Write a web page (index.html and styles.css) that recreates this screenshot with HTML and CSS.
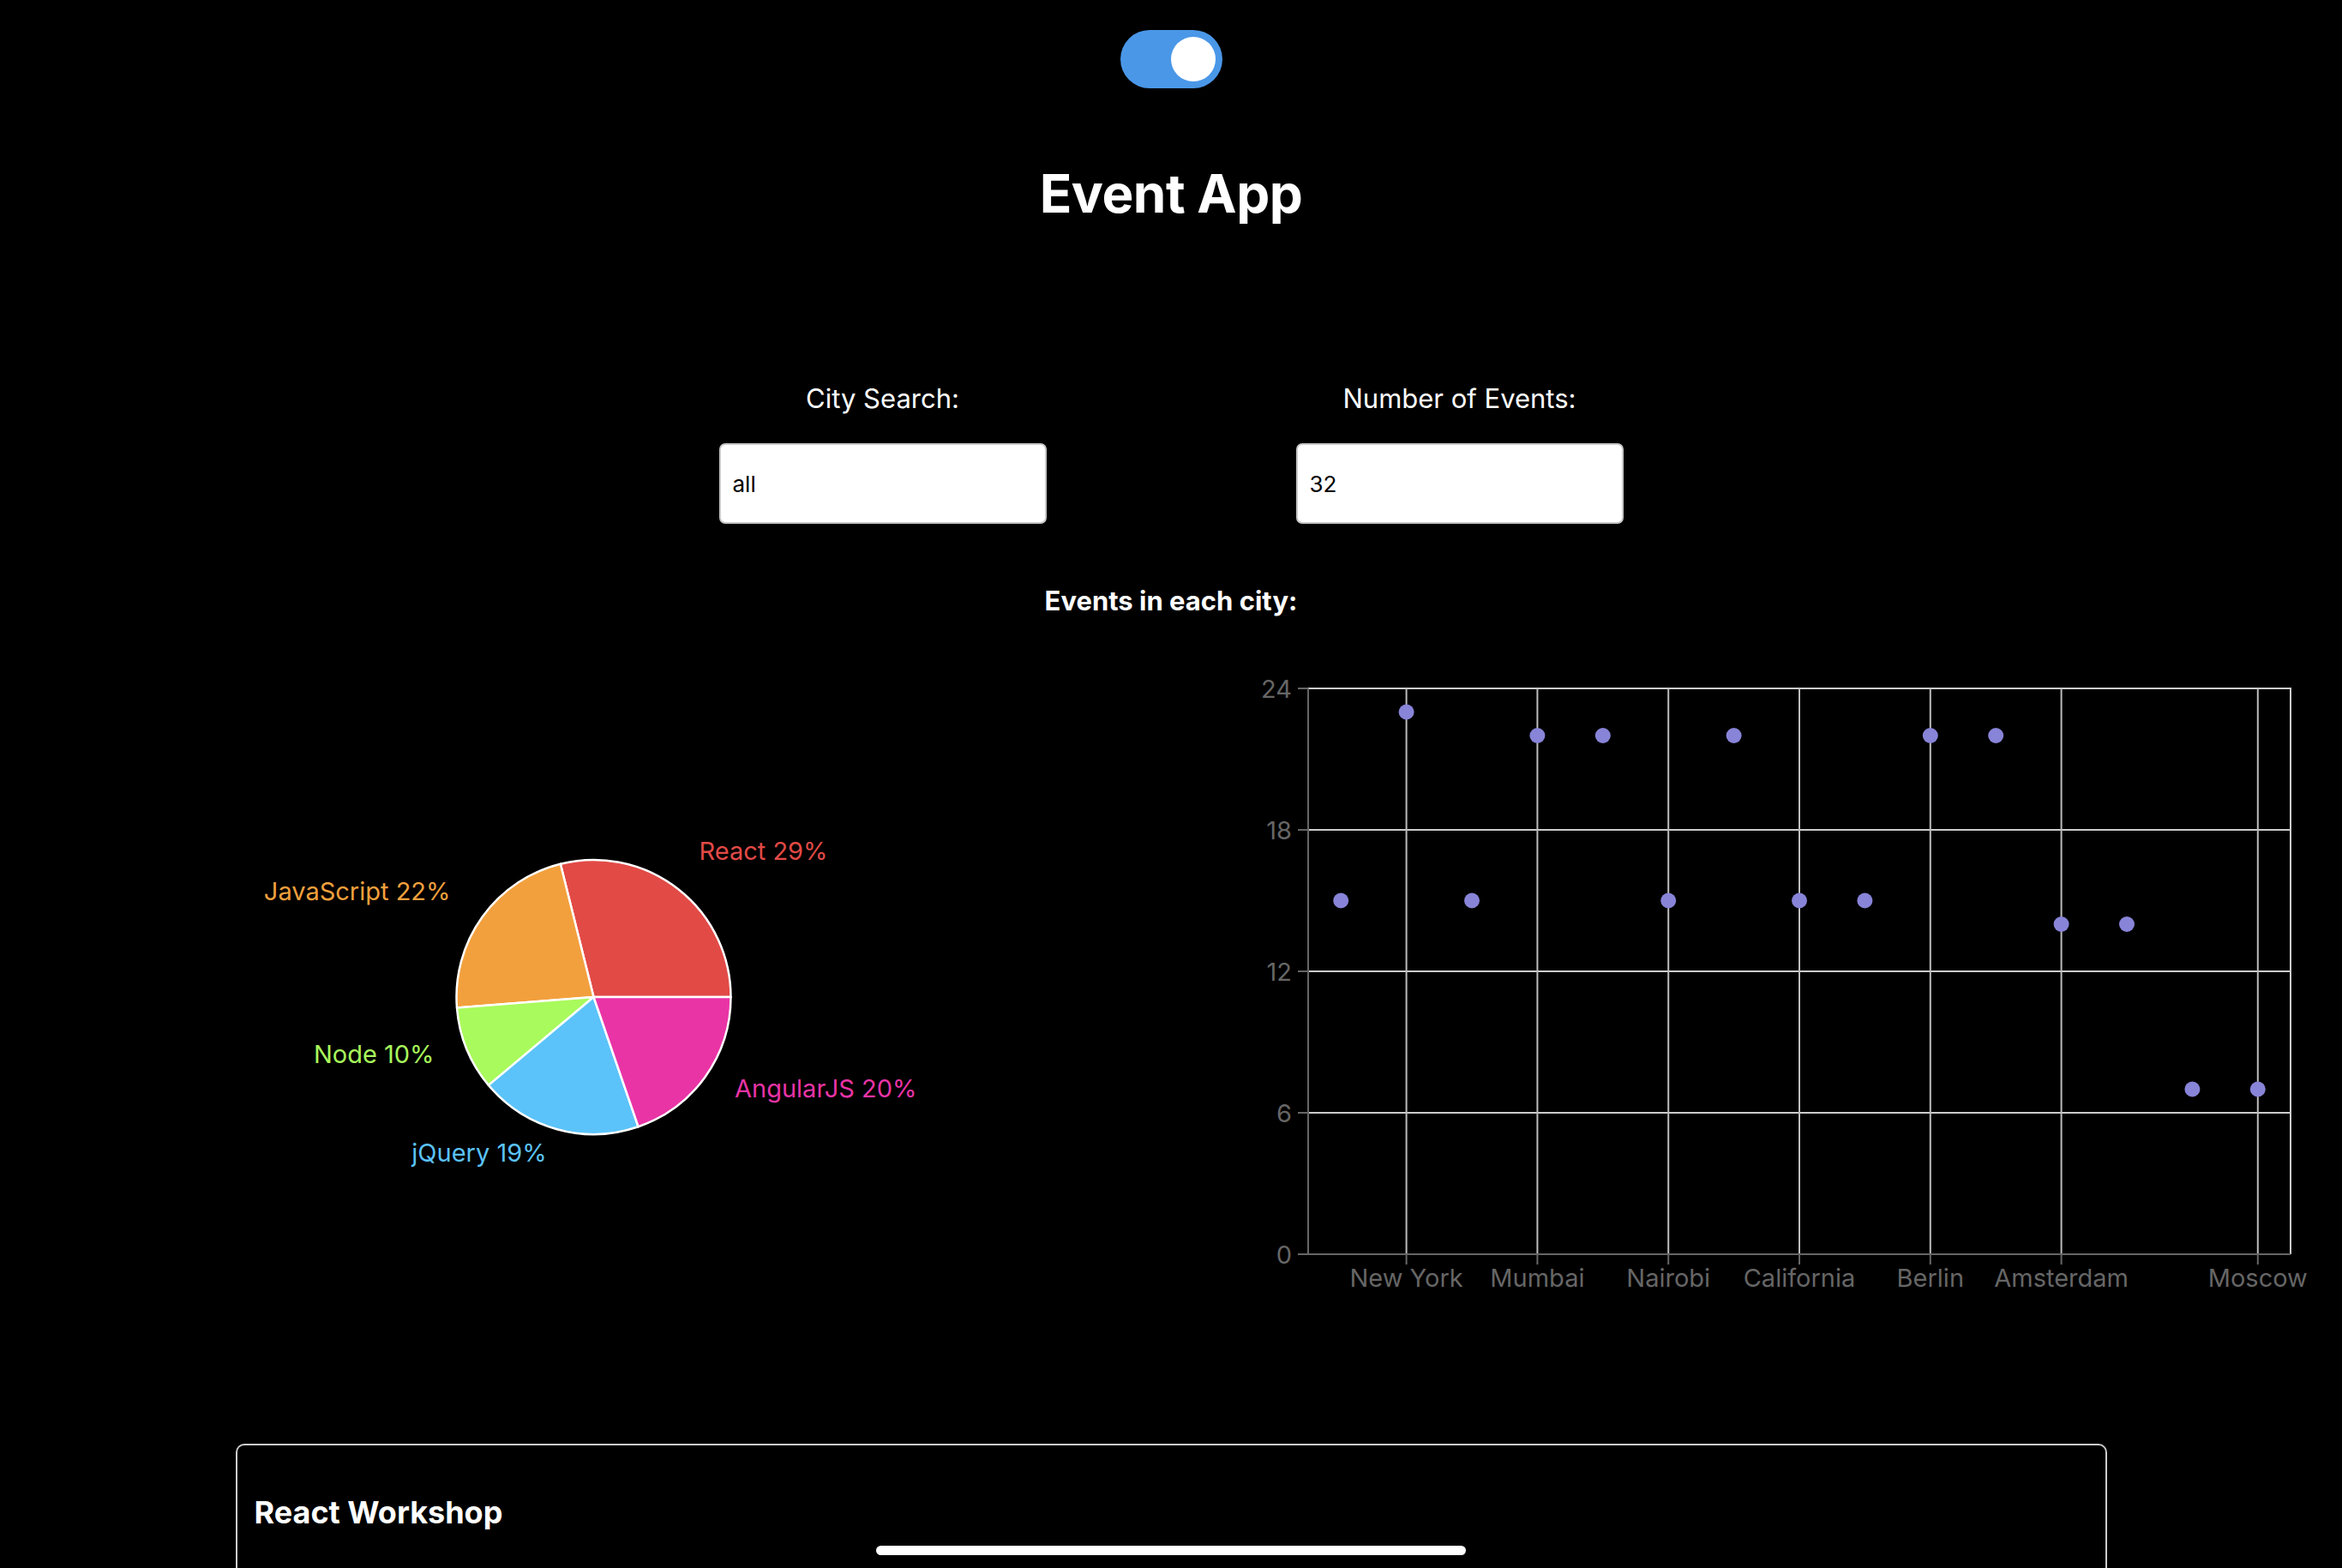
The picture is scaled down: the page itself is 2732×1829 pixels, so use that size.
FILE: index.html
```html
<!DOCTYPE html>
<html lang="en">
<head>
<meta charset="utf-8">
<title>Event App</title>
<link rel="stylesheet" href="styles.css">
</head>
<body>
<div class="app">
  <div class="toggle"><span class="knob"></span></div>
  <h1 class="title">Event App</h1>

  <div class="filters">
    <div class="field">
      <label class="field-label">City Search:</label>
      <input class="field-input" type="text" value="all">
    </div>
    <div class="field">
      <label class="field-label">Number of Events:</label>
      <input class="field-input" type="text" value="32">
    </div>
  </div>

  <h4 class="charts-title">Events in each city:</h4>

  <div class="charts">
    <svg class="chart" width="1366" height="780" viewBox="0 0 1366 780">
      <g stroke="#ffffff" stroke-width="2.5" stroke-linejoin="round">
        <path fill="#E24A46" d="M692.5 403 L852.5 403 A160 160 0 0 0 653.79 247.75 Z"/>
        <path fill="#F2A03D" d="M692.5 403 L653.79 247.75 A160 160 0 0 0 532.99 415.55 Z"/>
        <path fill="#A9FA5C" d="M692.5 403 L532.99 415.55 A160 160 0 0 0 569.93 505.85 Z"/>
        <path fill="#5BC3F9" d="M692.5 403 L569.93 505.85 A160 160 0 0 0 744.59 554.28 Z"/>
        <path fill="#E934A6" d="M692.5 403 L744.59 554.28 A160 160 0 0 0 852.5 403 Z"/>
      </g>
      <g class="pie-label">
        <text x="815.5" y="243" fill="#E24A46" text-anchor="start">React 29%</text>
        <text x="525.5" y="290" fill="#F2A03D" text-anchor="end">JavaScript 22%</text>
        <text x="506.6" y="480" fill="#A9FA5C" text-anchor="end">Node 10%</text>
        <text x="637.7" y="595" fill="#5BC3F9" text-anchor="end">jQuery 19%</text>
        <text x="857" y="520" fill="#E934A6" text-anchor="start">AngularJS 20%</text>
      </g>
    </svg>

    <svg class="chart" width="1366" height="780" viewBox="0 0 1366 780">
      <g stroke="#cccccc" stroke-width="2">
        <line x1="160" y1="43" x2="1306" y2="43"/>
        <line x1="160" y1="208" x2="1306" y2="208"/>
        <line x1="160" y1="373" x2="1306" y2="373"/>
        <line x1="160" y1="538" x2="1306" y2="538"/>
      </g>
      <g stroke="#bdbdbd" stroke-width="2">
        <line x1="274.6" y1="43" x2="274.6" y2="703"/>
        <line x1="427.4" y1="43" x2="427.4" y2="703"/>
        <line x1="580.2" y1="43" x2="580.2" y2="703"/>
        <line x1="733" y1="43" x2="733" y2="703"/>
        <line x1="885.8" y1="43" x2="885.8" y2="703"/>
        <line x1="1038.6" y1="43" x2="1038.6" y2="703"/>
        <line x1="1267.8" y1="43" x2="1267.8" y2="703"/>
        <line x1="1306" y1="42" x2="1306" y2="703" stroke="#cccccc"/>
      </g>
      <g stroke="#666666" stroke-width="2">
        <line x1="160" y1="43" x2="160" y2="704"/>
        <line x1="148" y1="703" x2="1306" y2="703"/>
        <line x1="148" y1="43" x2="160" y2="43"/>
        <line x1="148" y1="208" x2="160" y2="208"/>
        <line x1="148" y1="373" x2="160" y2="373"/>
        <line x1="148" y1="538" x2="160" y2="538"/>
        <line x1="274.6" y1="703" x2="274.6" y2="715"/>
        <line x1="427.4" y1="703" x2="427.4" y2="715"/>
        <line x1="580.2" y1="703" x2="580.2" y2="715"/>
        <line x1="733" y1="703" x2="733" y2="715"/>
        <line x1="885.8" y1="703" x2="885.8" y2="715"/>
        <line x1="1038.6" y1="703" x2="1038.6" y2="715"/>
        <line x1="1267.8" y1="703" x2="1267.8" y2="715"/>
      </g>
      <g class="axis-label" text-anchor="end">
        <text x="141" y="54">24</text>
        <text x="141" y="219">18</text>
        <text x="141" y="384">12</text>
        <text x="141" y="549">6</text>
        <text x="141" y="714">0</text>
      </g>
      <g class="axis-label" text-anchor="middle">
        <text x="274.6" y="741">New York</text>
        <text x="427.4" y="741">Mumbai</text>
        <text x="580.2" y="741">Nairobi</text>
        <text x="733" y="741">California</text>
        <text x="885.8" y="741">Berlin</text>
        <text x="1038.6" y="741">Amsterdam</text>
        <text x="1267.8" y="741">Moscow</text>
      </g>
      <g fill="#8884d8">
        <circle cx="198.2" cy="290.5" r="9"/>
        <circle cx="274.6" cy="70.5" r="9"/>
        <circle cx="351" cy="290.5" r="9"/>
        <circle cx="427.4" cy="98" r="9"/>
        <circle cx="503.8" cy="98" r="9"/>
        <circle cx="580.2" cy="290.5" r="9"/>
        <circle cx="656.6" cy="98" r="9"/>
        <circle cx="733" cy="290.5" r="9"/>
        <circle cx="809.4" cy="290.5" r="9"/>
        <circle cx="885.8" cy="98" r="9"/>
        <circle cx="962.2" cy="98" r="9"/>
        <circle cx="1038.6" cy="318" r="9"/>
        <circle cx="1115" cy="318" r="9"/>
        <circle cx="1191.4" cy="510.5" r="9"/>
        <circle cx="1267.8" cy="510.5" r="9"/>
      </g>
    </svg>
  </div>

  <div class="event-card">
    <h2 class="event-title">React Workshop</h2>
  </div>
</div>
<div class="home-indicator"></div>
</body>
</html>
```

FILE: styles.css
```css
html, body {
  margin: 0;
  padding: 0;
  background: #000000;
  height: 1829px;
  overflow: hidden;
}

body {
  font-family: Inter, "Liberation Sans", sans-serif;
  color: #ffffff;
}

.app {
  display: flex;
  flex-direction: column;
  align-items: center;
}

.toggle {
  margin-top: 35px;
  width: 119px;
  height: 68px;
  box-sizing: border-box;
  padding: 8px;
  border-radius: 34px;
  background: #4a97e8;
  display: flex;
  justify-content: flex-end;
}

.knob {
  width: 52px;
  height: 52px;
  border-radius: 50%;
  background: #ffffff;
}

.title {
  margin: 91px 0 0;
  font-size: 62px;
  line-height: 64px;
  font-weight: 700;
  letter-spacing: -0.5px;
}

.filters {
  margin-top: 191px;
  display: flex;
  gap: 291px;
}

.field {
  width: 382px;
  display: flex;
  flex-direction: column;
  align-items: center;
}

.field-label {
  font-size: 31px;
  line-height: 32px;
  font-weight: 400;
}

.field-input {
  margin-top: 36px;
  width: 382px;
  height: 94px;
  box-sizing: border-box;
  border: 2px solid #c8c8c8;
  border-radius: 7px;
  background: #ffffff;
  padding: 0 14px;
  font-family: Inter, "Liberation Sans", sans-serif;
  font-size: 26px;
  color: #000000;
  outline: none;
}

.charts-title {
  margin: 74px 0 0;
  font-size: 31px;
  line-height: 32px;
  font-weight: 700;
}

.charts {
  margin-top: 43px;
  width: 2732px;
  display: flex;
}

.chart {
  display: block;
}

.pie-label text {
  font-family: Inter, "Liberation Sans", sans-serif;
  font-size: 29px;
}

.axis-label text {
  font-family: Inter, "Liberation Sans", sans-serif;
  font-size: 29px;
  fill: #666666;
}

.event-card {
  margin-top: 144px;
  width: 2183px;
  height: 145px;
  box-sizing: border-box;
  border: 2px solid #cccccc;
  border-bottom: none;
  border-radius: 10px 10px 0 0;
  background: #000000;
  padding: 60px 20px 0;
}

.event-title {
  margin: 0;
  font-size: 36px;
  line-height: 36px;
  font-weight: 700;
}

.home-indicator {
  position: fixed;
  left: 50%;
  bottom: 15px;
  width: 688px;
  height: 11px;
  margin-left: -344px;
  border-radius: 6px;
  background: #ffffff;
}
```
